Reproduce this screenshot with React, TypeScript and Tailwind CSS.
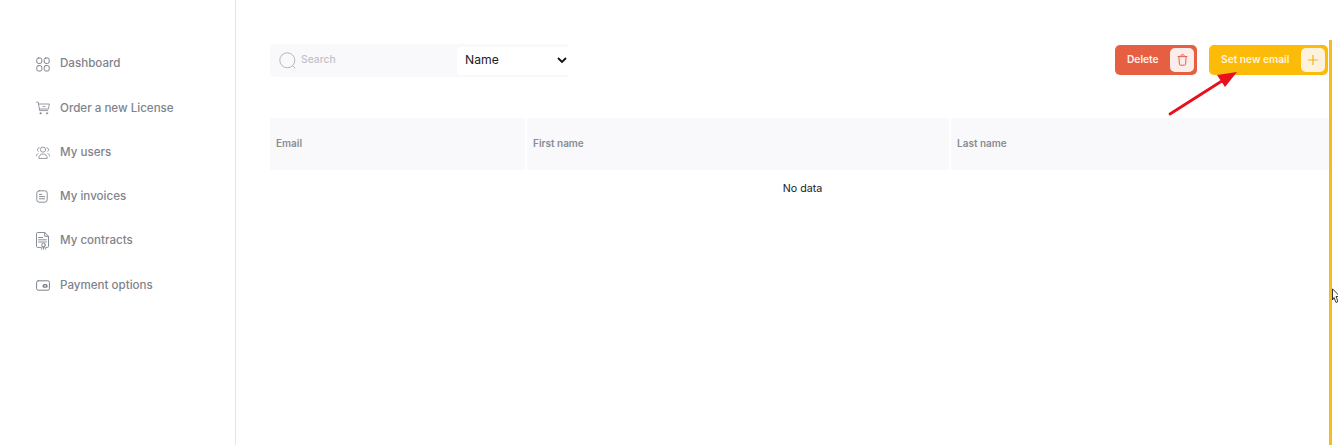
import React from "react";

const ic = { fill: "none", stroke: "#7d8189", strokeWidth: 1, strokeLinecap: "round" as const, strokeLinejoin: "round" as const };

const icons: React.ReactNode[] = [
  <svg key="a" width="14" height="15" viewBox="0 0 14 15" {...ic}>
    <rect x="0.8" y="1" width="5" height="5.4" rx="1.6" /><rect x="8.2" y="1" width="5" height="5.4" rx="1.6" />
    <rect x="0.8" y="8.6" width="5" height="5.4" rx="1.6" /><rect x="8.2" y="8.6" width="5" height="5.4" rx="1.6" />
  </svg>,
  <svg key="b" width="14" height="14" viewBox="0 0 14 14" {...ic} strokeWidth="0.8">
    <path d="M0.6 1.2h1.6l1.5 8.4h8.2" /><path d="M2.5 3h10.9l-1.1 5H3.4" /><path d="M7 5.5h2" />
    <circle cx="4.5" cy="12.3" r="0.7" /><circle cx="11" cy="12.3" r="0.7" />
  </svg>,
  <svg key="c" width="14" height="13" viewBox="0 0 14 13" {...ic} strokeWidth="0.8">
    <circle cx="7" cy="3.6" r="2.6" /><path d="M2.8 12c0-2.6 1.9-4 4.2-4s4.2 1.4 4.2 4z" />
    <path d="M3.2 1.6a2.2 2.2 0 0 0-1 3.8" /><path d="M10.8 1.6a2.2 2.2 0 0 1 1 3.8" />
    <path d="M0.4 10c0-1.2.6-2 1.6-2.4" /><path d="M13.6 10c0-1.2-.6-2-1.6-2.4" />
  </svg>,
  <svg key="d" width="12" height="13" viewBox="0 0 12 13" {...ic} strokeWidth="0.9">
    <rect x="0.8" y="0.8" width="10.4" height="11.4" rx="2.4" /><path d="M3.4 4.4h2.4M3.4 6.6h5.2M3.4 8.8h5.2" />
  </svg>,
  <svg key="e" width="13" height="18" viewBox="0 0 13 18" {...ic} strokeWidth="0.9">
    <path d="M5 15.4H1.5a1 1 0 0 1-1-1V1.5a1 1 0 0 1 1-1h7.2l3.8 3.8v10.1a1 1 0 0 1-1 1H10" /><path d="M8.7.5v3.8h3.8" />
    <path d="M2.6 5.5h4M2.6 7.8h7.8M2.6 10h7.8" /><circle cx="7.5" cy="13" r="1.8" /><path d="M6.4 14.6l-1 2.6M8.6 14.6l1 2.6M7.5 15v2.2" />
  </svg>,
  <svg key="f" width="14" height="11" viewBox="0 0 14 11" {...ic}>
    <rect x="0.6" y="0.8" width="12.8" height="9.4" rx="1.6" /><rect x="6.6" y="4" width="5" height="3.8" rx="1.6" fill="#7d8189" stroke="none" />
    <circle cx="9.1" cy="5.9" r="0.8" fill="#fff" stroke="none" />
  </svg>,
];

const nav = ["Dashboard", "Order a new License", "My users", "My invoices", "My contracts", "Payment options"];

export default function App() {
  return (
    <div className="relative flex h-[445px] w-[1338px] overflow-hidden bg-white font-['Inter',sans-serif]">
      <aside className="flex h-full w-[236px] shrink-0 flex-col gap-[24.26px] border-r border-[#e4e5e8] pl-[36px] pt-[54.1px]">
        {nav.map((t, i) => (
          <div key={t} className="flex h-[20px] items-center">
            <span className="flex w-[24px] shrink-0 items-center justify-start">{icons[i]}</span>
            <span className="text-[11.6px] font-medium text-[#7f838b]">{t}</span>
          </div>
        ))}
      </aside>

      <main className="flex min-w-0 flex-1 flex-col pl-[34px] pt-[44px]">
        <div className="flex h-[33px] w-[1058px] items-start justify-between">
          <div className="flex h-[33px] w-[298px] items-center rounded-l-[4px] bg-[#f9f9fb]">
            <div className="flex w-[187px] items-center pl-[9px]">
              <svg width="18" height="18" viewBox="0 0 18 18" fill="none" stroke="#b4b6bb" strokeWidth="1">
                <circle cx="8.3" cy="8.3" r="7.5" /><path d="M13.8 13.8l2.6 2.6" />
              </svg>
              <span className="ml-[4px] -translate-y-[1px] text-[10.3px] font-medium text-[#c0c2c6]">Search</span>
            </div>
            <div className="flex h-[28px] w-[111px] items-center justify-between rounded-l-[4px] bg-white pl-[8px] text-[12.2px] font-normal text-[#1f2024]">
              <span className="-translate-y-[0.5px]">Name</span>
              <svg width="10" height="7" viewBox="0 0 10 7" fill="none" stroke="#111" strokeWidth="1.8" className="mr-[1px]">
                <path d="M1 1l4 4 4-4" />
              </svg>
            </div>
          </div>

          <div className="flex items-center gap-[12px] pt-[1px]">
            <div className="flex h-[30px] w-[82px] items-center justify-between rounded-[5px] bg-[#e65f43] pl-[12px] pr-[3px]">
              <span className="text-[10.2px] font-semibold text-[#fdf1ec]">Delete</span>
              <span className="flex h-[24px] w-[24px] items-center justify-center rounded-[5px] bg-[#fbeeea]">
                <svg width="11" height="12" viewBox="0 0 11 12" fill="none" stroke="#e65f55" strokeWidth="1" strokeLinecap="round">
                  <path d="M1 2.6h9M3.8 2.4V1.6c0-.5.3-.8.8-.8h1.8c.5 0 .8.3.8.8v.8M1.9 2.8l.5 7.4c0 .6.5 1 1 1h4.2c.5 0 1-.4 1-1l.5-7.4" />
                </svg>
              </span>
            </div>
            <div className="flex h-[30px] w-[119px] items-center justify-between rounded-[5px] bg-[#fcba09] pl-[12px] pr-[3px]">
              <span className="text-[10.2px] font-semibold text-[#fff6dd]">Set new email</span>
              <span className="flex h-[24px] w-[24px] items-center justify-center rounded-[5px] bg-[#fdf3dc]">
                <svg width="12" height="12" viewBox="0 0 12 12" fill="none" stroke="#f0b420" strokeWidth="1.2">
                  <path d="M6 1v10M1 6h10" />
                </svg>
              </span>
            </div>
          </div>
        </div>

        <div className="mt-[41px] flex h-[52px] w-[1059px] gap-[2px] text-[10px] font-semibold text-[#8a8c93]">
          <div className="flex w-[255px] items-center bg-[#f9f9fb] pb-[1px] pl-[6px]">Email</div>
          <div className="flex w-[422px] items-center bg-[#f9f9fb] pb-[1px] pl-[6px]">First name</div>
          <div className="flex flex-1 items-center bg-[#f9f9fb] pb-[1px] pl-[6px]">Last name</div>
        </div>
        <div className="mt-[11px] w-[1065px] text-center text-[10.7px] font-normal text-[#1b1b1b]">No data</div>
      </main>

      <div className="absolute bottom-0 left-[1329px] top-[40px] w-[3px] bg-[#f6bb1f]" />

      <svg className="absolute left-[1165px] top-[68px]" width="80" height="50" viewBox="0 0 80 50">
        <path d="M5 46L60 11" stroke="#e8101c" strokeWidth="2.8" strokeLinecap="round" />
        <path d="M72 4L52 7l8 12z" fill="#e8101c" />
      </svg>

      <svg className="absolute left-[1332px] top-[288px]" width="6" height="18" viewBox="0 0 6 18" fill="#fff" stroke="#222" strokeWidth="0.9">
        <path d="M0.5 0.8L8 8.5H4l2 5-2 1-2-5-1.5 2.5z" />
      </svg>
    </div>
  );
}
